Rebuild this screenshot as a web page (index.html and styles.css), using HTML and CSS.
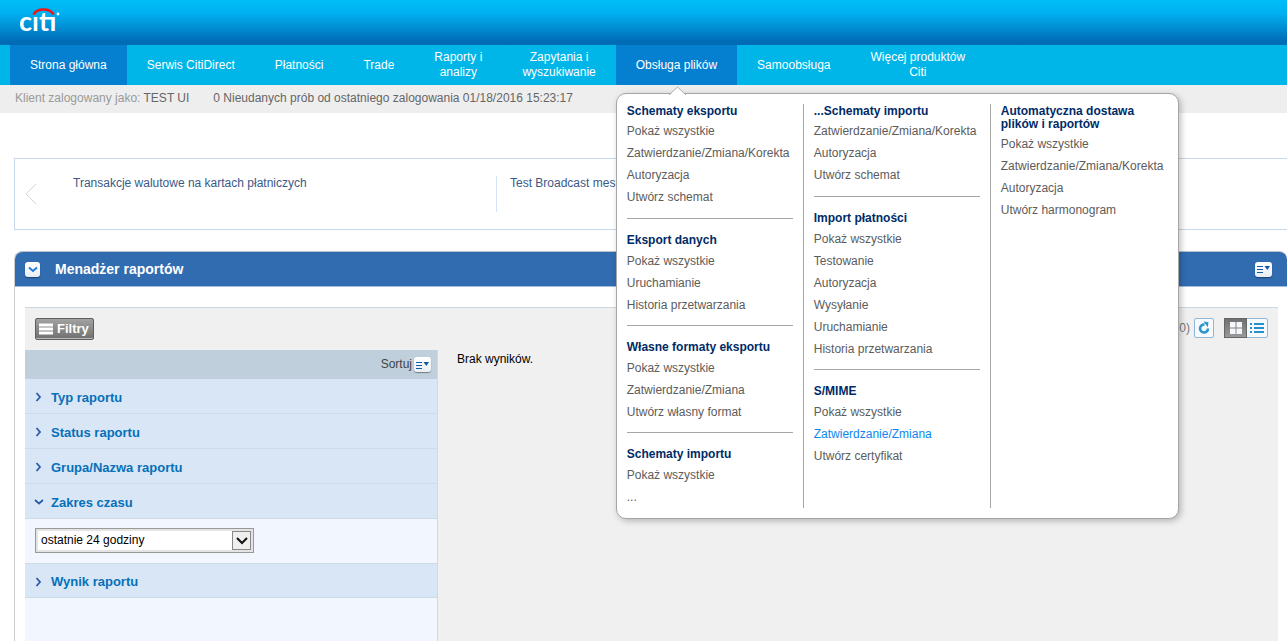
FILE: index.html
```html
<!DOCTYPE html>
<html lang="pl">
<head>
<meta charset="utf-8">
<title>CitiDirect - Menadżer raportów</title>
<link rel="stylesheet" href="styles.css">
</head>
<body>
<header class="brand">
  <a class="brand-link" href="#" aria-label="Citi">
    <svg width="44" height="32" viewBox="0 0 44 32">
      <text class="brand-text" x="-1" y="27">cıtı</text>
      <path d="M13.500 10.500C17 3.800 30 3.800 33.500 10.500" fill="none" stroke="#f01414" stroke-width="2.600"/>
      <circle cx="38" cy="10" r="1.400" fill="#fff"/>
    </svg>
  </a>
</header>

<nav class="nav">
  <ul class="nav-list">
    <li class="nav-item"><a class="nav-link active" href="#">Strona główna</a></li>
    <li class="nav-item"><a class="nav-link" href="#">Serwis CitiDirect</a></li>
    <li class="nav-item"><a class="nav-link" href="#">Płatności</a></li>
    <li class="nav-item"><a class="nav-link" href="#">Trade</a></li>
    <li class="nav-item"><a class="nav-link" href="#">Raporty i<br>analizy</a></li>
    <li class="nav-item"><a class="nav-link" href="#">Zapytania i<br>wyszukiwanie</a></li>
    <li class="nav-item">
      <a class="nav-link active" href="#">Obsługa plików</a>
      <div class="menu">
        <svg class="menu-tip" width="20" height="9" viewBox="0 0 20 9"><path d="M1 9L9.500 1L18 9" fill="#fff" stroke="#aaa"/></svg>
        <div class="menu-col">
          <section class="group">
            <h2 class="group-title">Schematy eksportu</h2>
            <a class="group-link" href="#">Pokaż wszystkie</a>
            <a class="group-link" href="#">Zatwierdzanie/Zmiana/Korekta</a>
            <a class="group-link" href="#">Autoryzacja</a>
            <a class="group-link" href="#">Utwórz schemat</a>
          </section>
          <section class="group">
            <h2 class="group-title">Eksport danych</h2>
            <a class="group-link" href="#">Pokaż wszystkie</a>
            <a class="group-link" href="#">Uruchamianie</a>
            <a class="group-link" href="#">Historia przetwarzania</a>
          </section>
          <section class="group">
            <h2 class="group-title">Własne formaty eksportu</h2>
            <a class="group-link" href="#">Pokaż wszystkie</a>
            <a class="group-link" href="#">Zatwierdzanie/Zmiana</a>
            <a class="group-link" href="#">Utwórz własny format</a>
          </section>
          <section class="group">
            <h2 class="group-title">Schematy importu</h2>
            <a class="group-link" href="#">Pokaż wszystkie</a>
            <a class="group-link" href="#">...</a>
          </section>
        </div>
        <div class="menu-col">
          <section class="group">
            <h2 class="group-title">...Schematy importu</h2>
            <a class="group-link" href="#">Zatwierdzanie/Zmiana/Korekta</a>
            <a class="group-link" href="#">Autoryzacja</a>
            <a class="group-link" href="#">Utwórz schemat</a>
          </section>
          <section class="group">
            <h2 class="group-title">Import płatności</h2>
            <a class="group-link" href="#">Pokaż wszystkie</a>
            <a class="group-link" href="#">Testowanie</a>
            <a class="group-link" href="#">Autoryzacja</a>
            <a class="group-link" href="#">Wysyłanie</a>
            <a class="group-link" href="#">Uruchamianie</a>
            <a class="group-link" href="#">Historia przetwarzania</a>
          </section>
          <section class="group">
            <h2 class="group-title">S/MIME</h2>
            <a class="group-link" href="#">Pokaż wszystkie</a>
            <a class="group-link current" href="#">Zatwierdzanie/Zmiana</a>
            <a class="group-link" href="#">Utwórz certyfikat</a>
          </section>
        </div>
        <div class="menu-col">
          <section class="group">
            <h2 class="group-title">Automatyczna dostawa plików i raportów</h2>
            <a class="group-link" href="#">Pokaż wszystkie</a>
            <a class="group-link" href="#">Zatwierdzanie/Zmiana/Korekta</a>
            <a class="group-link" href="#">Autoryzacja</a>
            <a class="group-link" href="#">Utwórz harmonogram</a>
          </section>
        </div>
      </div>
    </li>
    <li class="nav-item"><a class="nav-link" href="#">Samoobsługa</a></li>
    <li class="nav-item"><a class="nav-link" href="#">Więcej produktów<br>Citi</a></li>
  </ul>
</nav>

<div class="status">
  <p class="status-item"><span class="status-label">Klient zalogowany jako:</span> TEST UI</p>
  <p class="status-item">0 Nieudanych prób od ostatniego zalogowania 01/18/2016 15:23:17</p>
</div>

<main class="main">
  <section class="news">
    <button class="news-prev" type="button" aria-label="Poprzednie">
      <svg width="12" height="22" viewBox="0 0 12 22"><path d="M11 1L1 11L11 21" fill="none" stroke="#d4d4d4"/></svg>
    </button>
    <a class="news-item" href="#">Transakcje walutowe na kartach płatniczych</a>
    <a class="news-item" href="#">Test Broadcast mes</a>
  </section>

  <section class="panel">
    <header class="panel-head">
      <button class="icon-btn" type="button" aria-label="Zwiń">
        <svg width="14" height="14" viewBox="0 0 14 14"><path d="M3 5.500L7 9L11 5.500" fill="none" stroke="#1c78dc" stroke-width="1.800"/></svg>
      </button>
      <h1 class="panel-title">Menadżer raportów</h1>
      <button class="icon-btn wide" type="button" aria-label="Opcje">
        <svg width="17" height="14" viewBox="0 0 17 14"><path d="M2 4.500H8M2 7.500H8M2 10.500H8" stroke="#1258a8"/><path d="M9.500 4H15L12.300 8Z" fill="#1258a8"/></svg>
      </button>
    </header>

    <div class="content">
      <div class="toolbar">
        <button class="filter-btn" type="button">
          <svg width="14" height="12" viewBox="0 0 14 12"><path d="M0 2H14M0 6H14M0 10H14" stroke="#fff" stroke-width="3"/></svg>
          Filtry
        </button>
        <span class="count">(0)</span>
        <button class="refresh" type="button" aria-label="Odśwież">
          <svg width="14" height="14" viewBox="0 0 14 14"><path d="M7.500 3.600A4 4 0 1 0 11 7.500" fill="none" stroke="#2a94cc" stroke-width="2.600"/><path d="M6.500 0.500L11.500 1.200L10.800 6.200Z" fill="#2a94cc"/></svg>
        </button>
        <div class="views">
          <button class="view on" type="button" aria-label="Siatka">
            <svg width="12" height="12" viewBox="0 0 12 12"><path d="M0 0h5.500v5.500H0zM6.500 0H12v5.500H6.500zM0 6.500h5.500V12H0zM6.500 6.500H12V12H6.500z" fill="#f4f8fc"/></svg>
          </button>
          <button class="view" type="button" aria-label="Lista">
            <svg width="14" height="12" viewBox="0 0 14 12"><path d="M0 2H2M4 2H14M0 6H2M4 6H14M0 10H2M4 10H14" stroke="#2590cc" stroke-width="2"/></svg>
          </button>
        </div>
      </div>

      <div class="columns">
        <aside class="filters">
          <div class="sort">
            <span>Sortuj</span>
            <button class="icon-btn wide" type="button" aria-label="Sortuj">
              <svg width="17" height="14" viewBox="0 0 17 14"><path d="M2 4.500H8M2 7.500H8M2 10.500H8" stroke="#1258a8"/><path d="M9.500 4H15L12.300 8Z" fill="#1258a8"/></svg>
            </button>
          </div>
          <button class="row" type="button"><svg class="chev" width="10" height="10" viewBox="0 0 10 10"><path d="M2.500 1L6 5L2.500 9" fill="none" stroke="#2a5caa" stroke-width="1.800"/></svg>Typ raportu</button>
          <button class="row" type="button"><svg class="chev" width="10" height="10" viewBox="0 0 10 10"><path d="M2.500 1L6 5L2.500 9" fill="none" stroke="#2a5caa" stroke-width="1.800"/></svg>Status raportu</button>
          <button class="row" type="button"><svg class="chev" width="10" height="10" viewBox="0 0 10 10"><path d="M2.500 1L6 5L2.500 9" fill="none" stroke="#2a5caa" stroke-width="1.800"/></svg>Grupa/Nazwa raportu</button>
          <button class="row" type="button" aria-expanded="true"><svg class="chev" width="10" height="10" viewBox="0 0 10 10"><path d="M1 3L5 6.500L9 3" fill="none" stroke="#2a5caa" stroke-width="1.800"/></svg>Zakres czasu</button>
          <div class="row-body">
            <div class="pick">
              <select class="pick-select" aria-label="Zakres czasu"><option>ostatnie 24 godziny</option></select>
              <span class="pick-arrow"><svg width="12" height="8" viewBox="0 0 12 8"><path d="M1 1L6 6L11 1" fill="none" stroke="#111" stroke-width="2"/></svg></span>
            </div>
          </div>
          <button class="row" type="button"><svg class="chev" width="10" height="10" viewBox="0 0 10 10"><path d="M2.500 1L6 5L2.500 9" fill="none" stroke="#2a5caa" stroke-width="1.800"/></svg>Wynik raportu</button>
        </aside>
        <p class="results">Brak wyników.</p>
      </div>
    </div>
  </section>
</main>
</body>
</html>
```
FILE: styles.css
```css
* { box-sizing: border-box; }
body {
  margin: 0;
  min-height: 100vh;
  display: flex;
  flex-direction: column;
  background: #fff;
  font: 12px/15px "Liberation Sans", Arial, sans-serif;
  color: #000;
}
h1, h2, p, ul { margin: 0; padding: 0; }
ul { list-style: none; }
a { color: inherit; text-decoration: none; }
button { font: inherit; margin: 0; padding: 0; cursor: pointer; }
svg { display: block; flex: none; }

.brand {
  height: 45px;
  padding: 4px 20px;
  background: linear-gradient(#00bef8, #00b0f0 30%, #006cb6 92%);
}
.brand-link { display: inline-block; }
.brand-text { font: bold 27px Lato, sans-serif; fill: #fff; }

.nav { background: #00b5e8; padding: 0 10px; }
.nav-list { display: flex; height: 40px; }
.nav-item { position: relative; }
.nav-link {
  display: flex;
  align-items: center;
  height: 100%;
  padding: 0 20px;
  color: #fff;
  text-align: center;
  white-space: nowrap;
}
.nav-link.active { background: #057fd0; }

.menu {
  position: absolute;
  z-index: 5;
  top: 48px;
  left: 0;
  display: flex;
  padding: 10px 0;
  background: #fff;
  border: 1px solid #a6a6a6;
  border-radius: 10px;
  box-shadow: 2px 2px 6px rgba(0, 0, 0, .25);
}
.menu-tip { position: absolute; top: -8px; left: 51px; }
.menu-col { width: 187px; padding: 0 10px; border-right: 1px solid #a6a6a6; }
.menu-col:last-child { border-right: 0; }
.group + .group { margin-top: 9px; padding-top: 14px; border-top: 1px solid #a6a6a6; }
.group-title { padding: 1px 0 2px; font-size: 12px; line-height: 13px; color: #002b66; }
.group + .group .group-title { padding-bottom: 3px; }
.group:first-child { padding-bottom: 1px; }
.group-link { display: block; line-height: 22px; color: #5c5c5c; }
.group-link.current { color: #0d86f0; }

.status { display: flex; gap: 24px; height: 28px; padding: 6px 15px; background: #eee; color: #666; white-space: nowrap; }
.status-label { color: #999; }

.main { flex: 1; display: flex; flex-direction: column; gap: 21px; padding: 45px 0 0 14px; }

.news { display: flex; height: 72px; padding: 17px 0; border: 1px solid #c6d8ec; border-right: 0; color: #3a5a88; }
.news-prev { width: 44px; padding-left: 10px; border: 0; background: none; }
.news-item { width: 438px; padding: 0 14px; line-height: 14px; }
.news-prev + .news-item { width: 437px; }
.news-item + .news-item { border-left: 1px solid #d5e3f7; padding: 0 13px; }

.panel { flex: 1; display: flex; flex-direction: column; border-left: 1px solid #ccc; border-radius: 8px 8px 0 0; }
.panel-head {
  display: flex;
  align-items: center;
  height: 36px;
  padding: 0 15px 0 10px;
  background: #316cb1;
  border-top: 1px solid #b5c0cc;
  border-bottom: 1px solid #9fbcdc;
  border-radius: 8px 8px 0 0;
}
.panel-title { flex: 1; padding-left: 15px; font-size: 14px; color: #fff; }
.icon-btn {
  display: inline-flex;
  align-items: center;
  justify-content: center;
  width: 15px;
  height: 15px;
  border: 0;
  border-radius: 3px;
  background: linear-gradient(#fff, #e8eef4);
  box-shadow: 0 1px 1px rgba(0, 0, 0, .4);
}
.icon-btn.wide { width: 17px; }

.content { flex: 1; display: flex; flex-direction: column; margin: 20px 9px 0 10px; background: #f0f0f0; border-top: 1px solid #ccd9e4; }
.toolbar { display: flex; align-items: flex-start; height: 42px; padding: 10px 10px 0; }
.filter-btn {
  display: flex;
  align-items: center;
  gap: 4px;
  height: 22px;
  padding: 0 4px 1px 3px;
  margin-right: auto;
  border: 1px solid #5e5e5e;
  border-radius: 2px;
  background: linear-gradient(#a2a2a2, #707070);
  box-shadow: inset 0 -1px 0 #bbb;
  color: #fff;
  font-size: 13px;
  font-weight: bold;
}
.count { line-height: 20px; color: #777; }
.refresh {
  display: flex;
  align-items: center;
  justify-content: center;
  width: 20px;
  height: 20px;
  margin: 0 10px 0 4px;
  border: 1px solid #8fb8d8;
  border-radius: 2px;
  background: #f7fafc;
}
.views { display: flex; height: 20px; border: 1px solid #8fb8d8; border-radius: 2px; background: #f7fafc; }
.view { display: flex; align-items: center; justify-content: center; width: 21px; border: 0; background: none; }
.view.on { background: linear-gradient(#707070, #999); box-shadow: 0 0 0 1px #666; }

.columns { flex: 1; display: flex; }
.filters { width: 413px; background: #f2f6ff; border-right: 1px solid #ccdbe6; }
.sort {
  display: flex;
  align-items: center;
  justify-content: flex-end;
  gap: 2px;
  height: 29px;
  padding-right: 6px;
  background: #bfcfdc;
  color: #444;
}
.row {
  display: flex;
  align-items: center;
  gap: 7px;
  width: 100%;
  height: 35px;
  padding: 2px 9px 0;
  border: 0;
  border-bottom: 1px solid #ccdbe6;
  background: #d9e6f5;
  color: #0670ba;
  font-size: 13px;
  font-weight: bold;
}
.row-body { height: 44px; padding: 9px 10px; }
.row-body + .row { border-top: 1px solid #ccdbe6; }
.pick { display: flex; align-items: center; width: 219px; height: 25px; border: 1px solid #999; background: #fff; box-shadow: inset 0 0 0 2px #e4e4e4; }
.pick-select {
  flex: 1;
  height: 100%;
  padding: 0 5px;
  appearance: none;
  border: 0;
  background: none;
  font: inherit;
  color: #000;
}
.pick-arrow {
  display: flex;
  align-items: center;
  justify-content: center;
  width: 19px;
  height: 19px;
  margin-right: 2px;
  border: 1px solid #888;
  background: #eee;
  pointer-events: none;
}
.results { padding: 2px 19px; }
```
